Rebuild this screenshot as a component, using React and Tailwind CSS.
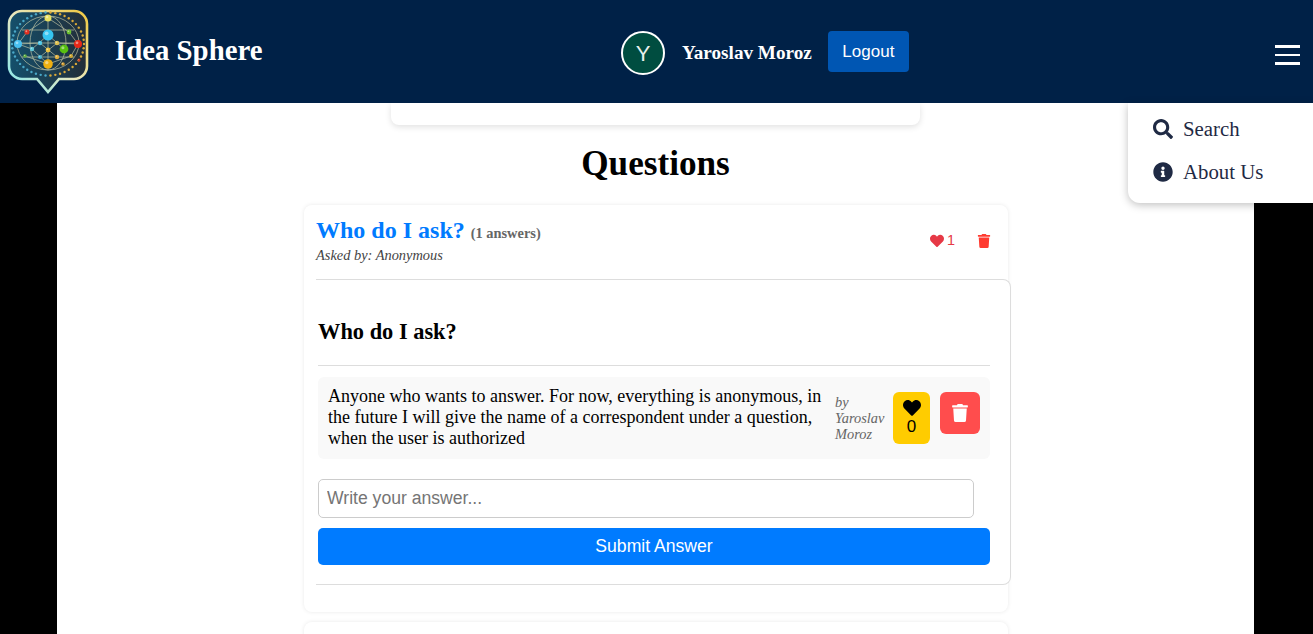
import React from "react";
import { FaSearch, FaInfoCircle, FaHeart, FaTrash } from "react-icons/fa";

function Logo() {
  const nodes = [
    [48, 15, 3.5, "#e8e060"], [48, 32, 5.5, "#36c5f0"], [27, 29, 2.6, "#e03020"], [69, 29, 2.4, "#6cc030"],
    [18, 41, 4, "#48c0f0"], [78, 41, 4, "#e82818"], [40, 40, 2.2, "#50c8e8"], [57, 40, 2.2, "#e0c050"],
    [32, 46, 2.2, "#60c8d8"], [48, 47, 2.4, "#e8c040"], [64, 46, 4.4, "#58c010"], [25, 53, 1.8, "#60b040"],
    [40, 54, 2, "#48b8d8"], [57, 54, 2.2, "#e0b040"], [71, 53, 2, "#d0a830"], [48, 61, 4.8, "#f0b010"],
    [63, 61, 1.8, "#d8a030"], [79, 57, 1.5, "#d04020"],
  ];
  const dots = [];
  for (let i = 0; i < 46; i++) {
    const a = (i / 46) * Math.PI * 2;
    const x = 48 + Math.cos(a) * 36;
    const y = 41 + Math.sin(a) * 31.5;
    dots.push([x, y, x < 48 ? "#4aa8c8" : "#d8a838"]);
  }
  return (
    <svg width="84" height="84" viewBox="0 0 96 96" className="shrink-0 w-[96px] h-[96px]">
      <defs>
        <linearGradient id="lg" x1="0" y1="1" x2="1" y2="0">
          <stop offset="0" stopColor="#7fe8f0" />
          <stop offset="0.5" stopColor="#e8e8c0" />
          <stop offset="1" stopColor="#f0c840" />
        </linearGradient>
        <linearGradient id="bg" x1="0" y1="0" x2="1" y2="0">
          <stop offset="0" stopColor="#14506c" />
          <stop offset="1" stopColor="#232d38" />
        </linearGradient>
      </defs>
      <path d="M22 8H74A13 13 0 0 1 87 21V63A13 13 0 0 1 74 76H59L48 89L37 76H22A13 13 0 0 1 9 63V21A13 13 0 0 1 22 8Z" fill="url(#bg)" stroke="url(#lg)" strokeWidth="2.6" />
      {dots.map(([x, y, c], i) => <circle key={i} cx={x} cy={y} r="1.2" fill={c} />)}
      <g fill="none" stroke="#d8d8b0" strokeWidth="0.7" opacity="0.85">
        <ellipse cx="48" cy="40" rx="31" ry="27" />
        <ellipse cx="48" cy="40" rx="18" ry="27" />
        <path d="M17 40H79M22 27H74M22 54H74M48 13V67" />
        <path d="M48 15L27 29L18 41L32 46L48 61L71 53L78 41L69 29L48 15M48 32L32 46M48 32L64 46M40 40L57 54M57 40L40 54M18 41L40 40M57 40L78 41M25 53L48 61" />
      </g>
      {nodes.map(([x, y, r, c], i) => (
        <g key={i}>
          <circle cx={x} cy={y} r={r} fill={c} />
          <circle cx={x - r * 0.25} cy={y - r * 0.3} r={r * 0.35} fill="#ffffff" opacity="0.45" />
        </g>
      ))}
    </svg>
  );
}

export default function App() {
  return (
    <div className="h-[634px] overflow-hidden bg-black relative font-['Liberation_Serif',serif]">
      <header className="h-[103px] bg-[#002147] flex items-center text-white relative">
        <div className="w-[96px] h-[103px] flex items-center -mt-[2px]"><Logo /></div>
        <h1 className="ml-[19px] text-[28.8px] font-bold leading-none -mt-[2px]">Idea Sphere</h1>
        <div className="absolute left-[621px] top-[31px] flex items-center">
          <div className="w-[44px] h-[44px] rounded-full bg-[#004d40] border-2 border-white flex items-center justify-center text-[22px] font-['Liberation_Sans',sans-serif] text-[#e8f0ee]">Y</div>
          <span className="ml-[17px] text-[19.2px] font-bold whitespace-nowrap">Yaroslav Moroz</span>
          <button className="ml-[16px] w-[81px] h-[41px] bg-[#0056b3] rounded text-[17px] font-['Liberation_Sans',sans-serif] -mt-[3px]">Logout</button>
        </div>
        <div className="absolute left-[1275px] top-[45px] w-[25px] flex flex-col gap-[6px]">
          <span className="h-[2.5px] bg-white block" />
          <span className="h-[2.5px] bg-white block" />
          <span className="h-[2.5px] bg-white block" />
        </div>
      </header>

      <main className="mx-[57px] w-[1197px] h-[531px] bg-white overflow-hidden">
        <div className="w-[529px] h-[22px] ml-[334px] bg-white rounded-b-lg shadow-[0_2px_6px_rgba(0,0,0,0.12)]" />
        <h2 className="text-[35.2px] font-bold text-black text-center leading-[40px] mt-[19px] ml-[0px]">Questions</h2>

        <section className="w-[704px] ml-[247px] mt-[21px] h-[407px] rounded-lg bg-white shadow-[0_0_4px_rgba(0,0,0,0.09)] relative pl-[12px] pt-[11px]">
          <div className="flex justify-between items-center pr-[17px]">
            <div>
              <div className="flex items-baseline">
                <span className="text-[24px] font-bold text-[#007bff] leading-[28px]">Who do I ask?</span>
                <span className="ml-[6px] text-[14.4px] font-bold text-[#666666]">(1 answers)</span>
              </div>
              <div className="text-[14.4px] italic text-[#444444] leading-[17px] mt-[2px]">Asked by: Anonymous</div>
            </div>
            <div className="flex items-center mt-[2px]">
              <FaHeart className="text-[#e63946] text-[14px]" />
              <span className="ml-[3px] text-[#e63946] text-[14.4px] font-['Liberation_Sans',sans-serif]">1</span>
              <FaTrash className="ml-[22px] text-[#ff3b30] text-[14px]" />
            </div>
          </div>

          <div className="mt-[15px] w-[695px] h-[306px] bg-white border border-l-0 border-[#dddddd] rounded-r-lg pt-[39px] pr-[20px] pl-[2px]">
            <h3 className="text-[22.4px] font-bold text-black leading-[26px]">Who do I ask?</h3>
            <div className="mt-[20px] border-t border-[#dddddd]" />
            <div className="mt-[11px] bg-[#f9f9f9] rounded-md h-[82px] flex items-center pl-[10px] pr-[10px]">
              <p className="w-[500px] shrink-0 text-[18px] leading-[21px] text-black">Anyone who wants to answer. For now, everything is anonymous, in the future I will give the name of a correspondent under a question, when the user is authorized</p>
              <div className="ml-[7px] w-[52px] shrink-0 text-[14.4px] italic text-[#666666] leading-[16px]">by Yaroslav Moroz</div>
              <div className="ml-[6px] w-[37px] h-[52px] shrink-0 bg-[#ffcc00] rounded-md flex flex-col items-center justify-center">
                <FaHeart className="text-black text-[18px]" />
                <span className="font-['Liberation_Sans',sans-serif] text-[17px] leading-[20px] text-black">0</span>
              </div>
              <div className="ml-[10px] w-[40px] h-[42px] shrink-0 -mt-[10px] bg-[#ff4d4d] rounded-md flex items-center justify-center">
                <FaTrash className="text-white text-[18px]" />
              </div>
            </div>
            <input placeholder="Write your answer..." className="mt-[20px] block w-[656px] h-[39px] px-[8px] border border-[#cccccc] rounded-[5px] bg-white text-[17.6px] font-['Liberation_Sans',sans-serif] placeholder:text-[#757575]" />
            <button className="mt-[10px] block w-full h-[37px] bg-[#007bff] rounded-[5px] text-white text-[17.6px] font-['Liberation_Sans',sans-serif]">Submit Answer</button>
          </div>
        </section>

        <section className="w-[704px] ml-[247px] mt-[10px] h-[40px] rounded-lg bg-white shadow-[0_0_4px_rgba(0,0,0,0.09)]" />
      </main>

      <nav className="absolute left-[1128px] top-[103px] w-[185px] h-[100px] bg-white rounded-bl-xl shadow-[0_2px_8px_rgba(0,0,0,0.25)] pl-[25px] pt-[4px] text-[#1f2a44] text-[20.8px]">
        <div className="h-[43px] flex items-center"><FaSearch className="text-[20px]" /><span className="ml-[10px]">Search</span></div>
        <div className="h-[43px] flex items-center"><FaInfoCircle className="text-[20px]" /><span className="ml-[10px]">About Us</span></div>
      </nav>
    </div>
  );
}
